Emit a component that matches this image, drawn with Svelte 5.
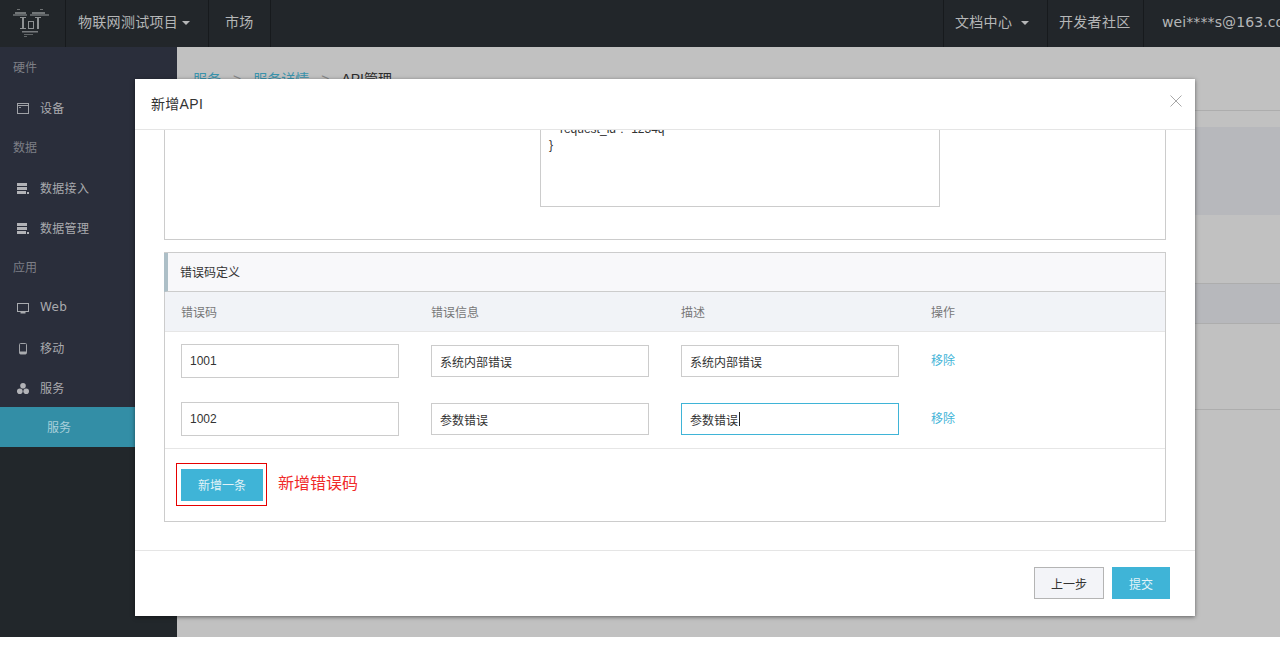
<script lang="ts">
	const sideItems = [
		{ kind: 'label', text: '硬件' },
		{ kind: 'item', text: '设备', icon: 'window' },
		{ kind: 'label', text: '数据' },
		{ kind: 'item', text: '数据接入', icon: 'data' },
		{ kind: 'item', text: '数据管理', icon: 'data' },
		{ kind: 'label', text: '应用' },
		{ kind: 'item', text: 'Web', icon: 'monitor' },
		{ kind: 'item', text: '移动', icon: 'mobile' },
		{ kind: 'item', text: '服务', icon: 'cluster' },
		{ kind: 'active', text: '服务' },
	];

	const columns = ['错误码', '错误信息', '描述', '操作'];

	const errorRows = [
		{ code: '1001', info: '系统内部错误', desc: '系统内部错误', focused: false },
		{ code: '1002', info: '参数错误', desc: '参数错误', focused: true },
	];
</script>

<div class="page">
	<header class="topbar">
		<div class="logo cell">
			<svg width="36" height="28" viewBox="0 0 36 28" fill="#8e9193">
				<rect x="4" y="0" width="3" height="1" opacity=".7" />
				<rect x="27" y="0" width="3" height="1" opacity=".7" />
				<rect x="2" y="3" width="11" height="2" opacity=".75" />
				<rect x="19" y="3" width="13" height="2" opacity=".75" />
				<rect x="0" y="5" width="14" height="2" opacity=".55" />
				<rect x="17" y="5" width="19" height="2" opacity=".55" />
				<rect x="7" y="8" width="6" height="1" />
				<rect x="9" y="8" width="2" height="12" />
				<rect x="7" y="19" width="6" height="1" />
				<rect x="15" y="12" width="6" height="1" />
				<rect x="15" y="19" width="6" height="1" />
				<rect x="15" y="12" width="1" height="8" />
				<rect x="20" y="12" width="1" height="8" />
				<rect x="22" y="8" width="6" height="1" />
				<rect x="24" y="8" width="2" height="12" />
				<rect x="9" y="22" width="16" height="1.5" opacity=".8" />
				<rect x="11" y="25" width="9" height="1" opacity=".6" />
				<rect x="11" y="27" width="3" height="1" opacity=".6" />
			</svg>
		</div>
		<div class="cell project">物联网测试项目<i class="caret"></i></div>
		<div class="cell market">市场</div>
		<div class="spacer"></div>
		<div class="cell docs">文档中心<i class="caret wide"></i></div>
		<div class="cell community">开发者社区</div>
		<div class="user">wei****s@163.com</div>
	</header>

	<div class="layout">
		<aside class="sidebar">
			<nav class="menu">
				{#each sideItems as item}
					{#if item.kind === 'label'}
						<div class="side-label">{item.text}</div>
					{:else if item.kind === 'active'}
						<div class="side-active">{item.text}</div>
					{:else}
						<div class="side-item">
							<svg class="side-icon" width="12" height="12" viewBox="0 0 12 12">
								{#if item.icon === 'window'}
									<rect x=".5" y=".5" width="11" height="10" fill="none" stroke="#a0a2a7" />
									<rect x="1" y="2" width="10" height="1" fill="#a0a2a7" />
									<rect x="2" y="4" width="2" height="1" fill="#8d9096" />
								{:else if item.icon === 'data'}
									<rect x="0" y="0" width="10" height="3" fill="#b2b3b7" />
									<rect x="0" y="4" width="10" height="3" fill="#b2b3b7" />
									<rect x="0" y="8" width="9" height="3" fill="#b2b3b7" />
									<rect x="10" y="9" width="2" height="2" fill="#b2b3b7" />
								{:else if item.icon === 'monitor'}
									<rect x=".5" y=".5" width="11" height="8" fill="none" stroke="#a9abaf" />
									<rect x="3.5" y="9" width="5" height="1.5" fill="#a9abaf" />
								{:else if item.icon === 'mobile'}
									<rect x="2.5" y=".5" width="7" height="10.5" rx="1" fill="none" stroke="#a0a2a7" />
									<rect x="3" y="8.5" width="6" height="2.5" fill="#a9abaf" />
								{:else}
									<circle cx="6" cy="2.8" r="2.8" fill="#b2b3b7" />
									<circle cx="2.8" cy="8.2" r="2.8" fill="#b2b3b7" />
									<circle cx="9.2" cy="8.2" r="2.8" fill="#b2b3b7" />
								{/if}
							</svg>
							<span class="side-text">{item.text}</span>
						</div>
					{/if}
				{/each}
			</nav>
		</aside>

		<main class="content">
			<div class="crumbs">
				<a href="#a">服务</a><span class="sep">&gt;</span><a href="#b">服务详情</a><span class="sep">&gt;</span><span class="here">API管理</span>
			</div>
			<div class="band tall"></div>
			<div class="band short"></div>
			<div class="rule"></div>
		</main>
	</div>

	<section class="modal">
		<div class="modal-head">
			<h3>新增API</h3>
			<svg class="close" width="12" height="12" viewBox="0 0 12 12">
				<path d="M.5 .5 11.5 11.5M11.5 .5 .5 11.5" stroke="#a8a8a8" fill="none" />
			</svg>
		</div>

		<div class="modal-body">
			<div class="panel-clipped">
				<div class="sample">
					<pre>  "request_id": "1234q"
}</pre>
				</div>
			</div>

			<div class="panel">
				<div class="panel-title">错误码定义</div>
				<div class="grid-row head">
					{#each columns as col}
						<div class="col-name">{col}</div>
					{/each}
				</div>
				{#each errorRows as row}
					<div class="grid-row">
						<input class="field tall-field" value={row.code} />
						<input class="field" value={row.info} />
						<div class="field-wrap">
							<input class="field" class:focused={row.focused} value={row.desc} />
							{#if row.focused}<span class="text-caret"></span>{/if}
						</div>
						<a class="remove" href="#r">移除</a>
					</div>
				{/each}
				<div class="panel-foot">
					<div class="highlight"><button class="btn primary add">新增一条</button></div>
					<span class="note">新增错误码</span>
				</div>
			</div>
		</div>

		<div class="modal-foot">
			<button class="btn ghost">上一步</button>
			<button class="btn primary submit">提交</button>
		</div>
	</section>
</div>

<style>
	:global(body) {
		background: #fff;
	}

	.page {
		position: relative;
		width: 1280px;
		height: 637px;
		overflow: hidden;
		font-family: "Liberation Sans", "Noto Sans CJK SC", sans-serif;
		font-size: 12px;
		color: #333;
	}

	.topbar {
		display: flex;
		height: 47px;
		background: #22262a;
		color: #b5b6b7;
		font-family: "DejaVu Sans", "Noto Sans CJK SC", sans-serif;
		font-size: 14px;
		letter-spacing: .3px;
		line-height: 45px;
		white-space: nowrap;
	}

	.cell {
		box-sizing: border-box;
		border-right: 1px solid #171a1d;
		flex: none;
	}

	.logo {
		width: 66px;
		padding: 9px 0 0 13px;
		line-height: 0;
	}

	.project {
		width: 143px;
		padding-left: 12px;
	}

	.market {
		width: 62px;
		padding-left: 16px;
	}

	.spacer {
		flex: 1;
		border-right: 1px solid #171a1d;
	}

	.docs {
		width: 104px;
		padding-left: 11px;
	}

	.community {
		width: 96px;
		padding-left: 11px;
	}

	.user {
		flex: none;
		width: 136px;
		padding-left: 18px;
		box-sizing: border-box;
		overflow: hidden;
		letter-spacing: .1px;
	}

	.caret {
		display: inline-block;
		margin-left: 4px;
		vertical-align: 2px;
		border: 4.5px solid transparent;
		border-top-color: #b5b6b7;
		border-bottom: 0;
	}

	.caret.wide {
		margin-left: 9px;
	}

	.layout {
		display: flex;
		height: 590px;
	}

	.sidebar {
		flex: none;
		width: 177px;
		background: #22272b;
	}

	.menu {
		background: #2a2e3b;
		color: #a9aaae;
	}

	.side-label {
		height: 40px;
		line-height: 43px;
		padding-left: 13px;
		color: #7d7f86;
	}

	.side-item {
		display: flex;
		align-items: center;
		height: 40px;
		padding-left: 17px;
		gap: 11px;
	}

	.side-icon {
		flex: none;
		margin-top: 3px;
	}

	.side-text {
		font-family: "DejaVu Sans", "Noto Sans CJK SC", sans-serif;
		letter-spacing: .3px;
	}

	.side-active {
		height: 40px;
		line-height: 42px;
		padding-left: 47px;
		background: #338ea6;
		color: #a9d0db;
	}

	.content {
		flex: 1;
		background: #c1c1c1;
	}

	.crumbs {
		box-sizing: border-box;
		height: 64px;
		padding: 22px 0 0 16px;
		border-bottom: 1px solid #adadad;
		font-size: 14px;
		line-height: 20px;
	}

	.crumbs a {
		color: #3a93ac;
		text-decoration: none;
	}

	.sep {
		margin: 0 12px;
		color: #888;
	}

	.here {
		color: #2b2b2b;
	}

	.band {
		background: #b7b8bc;
	}

	.band.tall {
		height: 88px;
		margin-top: 16px;
	}

	.band.short {
		box-sizing: border-box;
		height: 41px;
		margin-top: 68px;
		border-top: 1px solid #adadad;
		border-bottom: 1px solid #adadad;
	}

	.rule {
		margin-top: 85px;
		border-top: 1px solid #adadad;
	}

	.modal {
		position: absolute;
		left: 135px;
		top: 79px;
		display: flex;
		flex-direction: column;
		width: 1060px;
		height: 537px;
		background: #fff;
		box-shadow: 0 1px 4px rgba(0, 0, 0, .5);
	}

	.modal-head {
		display: flex;
		align-items: center;
		justify-content: space-between;
		box-sizing: border-box;
		flex: none;
		height: 51px;
		padding: 0 13px 2px 16px;
		border-bottom: 1px solid #e5e5e5;
	}

	.modal-head h3 {
		margin: 0;
		font-size: 14px;
		font-weight: 400;
		letter-spacing: .3px;
		color: #333;
	}

	.close {
		margin-top: -5px;
	}

	.modal-body {
		flex: 1;
		display: flex;
		flex-direction: column;
		gap: 12px;
		padding: 0 29px;
		overflow: hidden;
	}

	.panel-clipped {
		box-sizing: border-box;
		flex: none;
		height: 110px;
		padding-left: 375px;
		border: 1px solid #ccc;
		border-top: 0;
	}

	.sample {
		box-sizing: border-box;
		width: 400px;
		height: 77px;
		overflow: hidden;
		border: 1px solid #ccc;
		border-top: 0;
	}

	.sample pre {
		margin: -9px 0 0;
		padding-left: 8px;
		font-family: "Liberation Sans", sans-serif;
		font-size: 12px;
		line-height: 16px;
		color: #333;
	}

	.panel {
		box-sizing: border-box;
		flex: none;
		height: 270px;
		border: 1px solid #ccc;
	}

	.panel-title {
		box-sizing: border-box;
		height: 39px;
		margin-left: -1px;
		padding-left: 12px;
		border-left: 4px solid #adbfc7;
		border-bottom: 1px solid #ccc;
		background: #f8f8fa;
		line-height: 41px;
		color: #333;
	}

	.grid-row {
		display: grid;
		grid-template-columns: repeat(4, 250px);
		align-items: center;
		height: 58px;
		padding-left: 16px;
	}

	.grid-row.head {
		box-sizing: border-box;
		height: 40px;
		background: #f1f3f7;
		border-bottom: 1px solid #e6e6e6;
		color: #777;
	}

	.field {
		display: block;
		box-sizing: border-box;
		width: 218px;
		height: 32px;
		padding: 0 8px;
		border: 1px solid #ccc;
		border-radius: 0;
		outline: none;
		font: inherit;
		color: #333;
	}

	.tall-field {
		height: 34px;
	}

	.focused {
		border-color: #3fb4d7;
	}

	.field-wrap {
		position: relative;
	}

	.text-caret {
		position: absolute;
		left: 58px;
		top: 9px;
		width: 1px;
		height: 14px;
		background: #222;
	}

	.remove {
		margin-top: -4px;
		color: #3fb4d7;
		text-decoration: none;
	}

	.panel-foot {
		display: flex;
		align-items: center;
		gap: 11px;
		box-sizing: border-box;
		height: 73px;
		padding: 0 0 2px 11px;
		border-top: 1px solid #e6e6e6;
	}

	.highlight {
		box-sizing: border-box;
		width: 91px;
		height: 43px;
		padding: 5px 4px;
		border: 1px solid #e60000;
	}

	.note {
		margin-bottom: 4px;
		font-size: 16px;
		color: #f02a2a;
	}

	.btn {
		box-sizing: border-box;
		height: 32px;
		padding: 0;
		border: 0;
		border-radius: 0;
		font: inherit;
	}

	.primary {
		background: #3fb4d7;
		color: #e2f3f8;
	}

	.add {
		width: 82px;
	}

	.submit {
		width: 58px;
	}

	.ghost {
		width: 70px;
		background: #f3f4f8;
		border: 1px solid #b4b4b4;
		color: #333;
	}

	.modal-foot {
		display: flex;
		justify-content: flex-end;
		gap: 8px;
		box-sizing: border-box;
		flex: none;
		height: 66px;
		padding: 16px 25px 0 0;
		border-top: 1px solid #e5e5e5;
	}
</style>
